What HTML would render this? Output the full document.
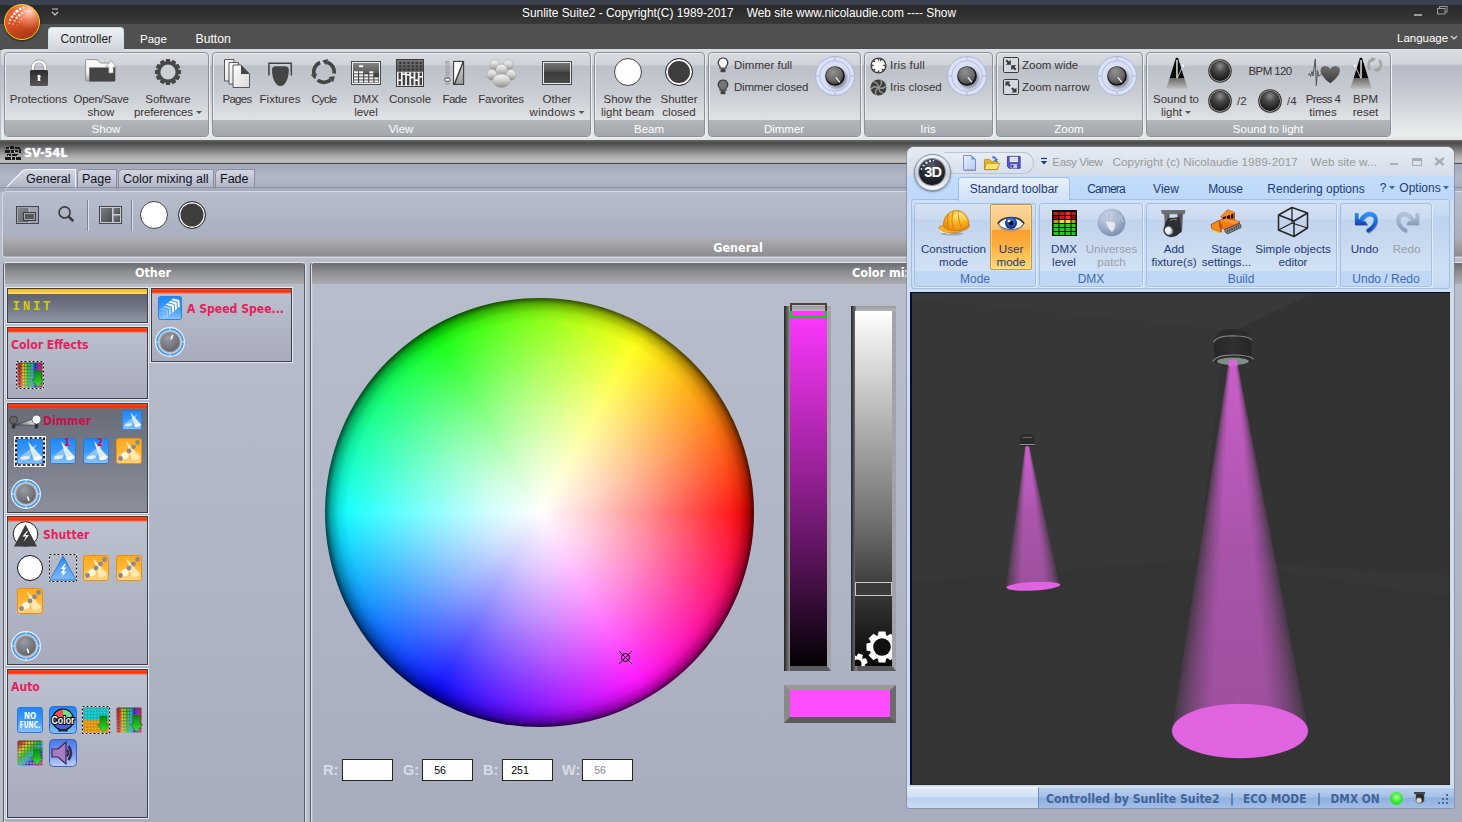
<!DOCTYPE html>
<html lang="en"><head><meta charset="utf-8"><title>Sunlite Suite2</title>
<style>
*{box-sizing:border-box;margin:0;padding:0}
html,body{width:1462px;height:822px;overflow:hidden}
body{position:relative;background:#b8bdcc;font-family:"Liberation Sans","DejaVu Sans",sans-serif;font-size:12px;color:#3a3a3a}
.a{position:absolute}
.t{position:absolute;white-space:nowrap;line-height:14px}
.c{text-align:center;transform:translateX(-50%)}
svg{position:absolute;overflow:visible}
/* main ribbon */
#topstrip{left:0;top:0;width:1462px;height:6px;background:#3c4150}
#titlebar{left:0;top:5px;width:1462px;height:20px;background:linear-gradient(#2b2b2b,#2e2e2e 40%,#3b3b3b)}
#tabrow{left:0;top:24.300px;width:1462px;height:25.700px;background:#505050}
#ribbon{left:1px;top:49px;width:1462px;height:91px;border-radius:4px 0 0 0;
 background:linear-gradient(#dadde3 0,#d0d4db 15px,#b5bac5 17px,#c3c7cf 40px,#dce0e3 68px,#e7ecec 85px,#e0e4e6 91px)}
.grp{position:absolute;top:52px;height:85px;border:1px solid #8c9098;border-radius:4px;
 background:linear-gradient(#d8dce2 0,#ced2d9 12px,#bcc0c9 13px,#c8ccd3 40px,#e0e4e6 68px);box-shadow:1px 1px 0 #eef0f3,inset 1px 1px 0 #e9ebef}
.grp i{position:absolute;left:0;right:0;bottom:0;height:16px;background:linear-gradient(#b3b6bb,#a3a6ab);border-radius:0 0 3px 3px}
.gl{position:absolute;white-space:nowrap;line-height:14px;color:#fff;top:122px;transform:translateX(-50%);font-size:11.5px}
.rt{position:absolute;white-space:nowrap;line-height:13px;text-align:center;transform:translateX(-50%);color:#3a3434;font-size:11.5px}
.st{position:absolute;white-space:nowrap;line-height:14px;color:#3a3434;font-size:11.5px}
.arr{display:inline-block;width:0;height:0;border-left:3px solid transparent;border-right:3px solid transparent;border-top:3px solid #555;vertical-align:middle;margin-left:3px}
</style></head><body>
<div class="a" id="topstrip"></div>
<div class="a" id="titlebar"></div>
<div class="a" id="tabrow"></div>
<div class="t" style="left:739px;top:6px;color:#fff;font-size:11.900px;transform:translateX(-50%);white-space:pre">Sunlite Suite2 - Copyright(C) 1989-2017    Web site www.nicolaudie.com ---- Show</div>
<div class="a" id="ribbon"></div>
<!-- active tab -->
<div class="a" style="left:48px;top:27px;width:76px;height:24px;border-radius:4px 4px 0 0;border:1px solid #bfe4ea;border-bottom:none;background:linear-gradient(#eef1f4,#dfe3e8 50%,#cfd3da)"></div>
<div class="t c" style="left:86.300px;top:32px;color:#222;font-size:11.900px">Controller</div>
<div class="t c" style="left:153.400px;top:32px;color:#fff;font-size:11.500px">Page</div>
<div class="t c" style="left:213.200px;top:32px;color:#fff;font-size:12.200px">Button</div>
<div class="t" style="left:1397px;top:31px;color:#fff;font-size:11.500px">Language</div>
<svg style="left:1449.500px;top:35px" width="8" height="6"><path d="M1 1 L4 4 L7 1" stroke="#ddd" stroke-width="1.2" fill="none"/></svg>
<!-- window buttons -->
<div class="a" style="left:1414px;top:14px;width:8px;height:2px;background:#9a9a9a"></div>
<svg style="left:1437px;top:6px" width="12" height="10"><rect x="2.5" y="0.5" width="7.500" height="5.500" fill="none" stroke="#9a9a9a"/><rect x="0.5" y="2.500" width="7.500" height="5.500" fill="#303030" stroke="#9a9a9a"/></svg>
<!-- qat arrow -->
<svg style="left:51px;top:8px" width="8" height="9"><path d="M1 1h6" stroke="#ccc" stroke-width="1"/><path d="M1 4 L4 7 L7 4" stroke="#ccc" stroke-width="1.2" fill="none"/></svg>
<!-- orb -->
<div class="a" style="left:4px;top:4px;width:36px;height:36px;border-radius:50%;background:radial-gradient(circle at 72% 18%,rgba(255,225,205,.95) 0,rgba(246,160,125,.7) 22%,rgba(230,100,50,0) 48%),linear-gradient(160deg,#e8663a 0,#e2562a 40%,#c2421c 70%,#9c3216 100%);border:1.800px solid #f4d81a;box-shadow:0 1px 2px rgba(0,0,0,.6)"></div>
<svg style="left:6px;top:5px" width="24" height="26" viewBox="0 0 24 26"><g fill="#fff"><circle cx="17.500" cy="2.500" r="1" opacity=".9"/><circle cx="14.200" cy="4" r="1.350" opacity=".95"/><circle cx="11" cy="6.200" r="1.450"/><circle cx="8.300" cy="8.800" r="1.400"/><circle cx="6" cy="11.800" r="1.300" opacity=".95"/><circle cx="4.300" cy="15" r="1.150" opacity=".9"/><circle cx="3.300" cy="18.300" r=".9" opacity=".8"/><circle cx="19.300" cy="6.200" r=".9" opacity=".7"/><circle cx="16.200" cy="8" r="1.150" opacity=".85"/><circle cx="13.300" cy="10.200" r="1.250" opacity=".9"/><circle cx="10.800" cy="12.800" r="1.200" opacity=".85"/><circle cx="8.700" cy="15.800" r="1.050" opacity=".8"/><circle cx="7.200" cy="19" r=".85" opacity=".65"/><circle cx="18" cy="12" r=".8" opacity=".55"/><circle cx="15.500" cy="14.300" r=".9" opacity=".6"/><circle cx="13.300" cy="17" r=".85" opacity=".55"/><circle cx="11.500" cy="20" r=".7" opacity=".45"/><circle cx="20.500" cy="10" r=".6" opacity=".4"/></g></svg>
<!-- groups -->
<div class="grp" style="left:4px;width:205px"><i></i></div>
<div class="grp" style="left:212px;width:379px"><i></i></div>
<div class="grp" style="left:594px;width:111px"><i></i></div>
<div class="grp" style="left:708px;width:153px"><i></i></div>
<div class="grp" style="left:864px;width:129px"><i></i></div>
<div class="grp" style="left:996px;width:147px"><i></i></div>
<div class="grp" style="left:1146px;width:245px"><i></i></div>
<div class="gl" style="left:106px">Show</div>
<div class="gl" style="left:401px">View</div>
<div class="gl" style="left:649px">Beam</div>
<div class="gl" style="left:784px">Dimmer</div>
<div class="gl" style="left:928px">Iris</div>
<div class="gl" style="left:1069px">Zoom</div>
<div class="gl" style="left:1268px">Sound to light</div>
<!-- Show group -->
<svg style="left:29px;top:59px" width="20" height="28" viewBox="0 0 20 28"><defs><linearGradient id="lk" x1="0" y1="0" x2="0" y2="1"><stop offset="0" stop-color="#2c2c2c"/><stop offset="1" stop-color="#565656"/></linearGradient></defs><path d="M3.800 13 V8.500 a6.200 6.200 0 0 1 12.400 0 V13" fill="none" stroke="#8e8e8e" stroke-width="3.400"/><path d="M3.800 13 V8.500 a6.200 6.200 0 0 1 12.400 0 V13" fill="none" stroke="#fbfbfb" stroke-width="2.200"/><rect x="1" y="11" width="18" height="16" rx="1.500" fill="url(#lk)"/><circle cx="10" cy="17.500" r="1.700" fill="#fff"/><path d="M9.100 17.500 h1.800 l.5 4.500 h-2.800z" fill="#fff"/></svg>
<svg style="left:85px;top:59px" width="32" height="24" viewBox="0 0 32 24"><defs><linearGradient id="fo" x1="0" y1="0" x2="0" y2="1"><stop offset="0" stop-color="#fdfdfd"/><stop offset=".6" stop-color="#f0f0f0"/><stop offset="1" stop-color="#a8a8a8"/></linearGradient></defs><path d="M.6 1.600 Q.6 .6 1.600 .6 h10.400 l3.600 3.400 h10 v18 h-24 q-1 0 -1 -1z" fill="url(#fo)" stroke="#8a8a8a" stroke-width=".9"/><path d="M4.300 8.400 h26 v13.200 q0 .9 -.9 .9 h-25.100z" fill="#454545"/><path d="M26 1.400 l5.300 6.600 h-3.100 v6 h-4.400 v-6 h-3.100z" fill="#fdfdfd" stroke="#8a8a8a" stroke-width=".7"/></svg>
<svg style="left:155px;top:59px" width="26" height="26" viewBox="-13 -13 26 26"><g fill="#484848"><circle r="10.600"/><g id="tooth"><path d="M-2 -13 h4 l.6 3.500 h-5.200z"/></g><use href="#tooth" transform="rotate(30)"/><use href="#tooth" transform="rotate(60)"/><use href="#tooth" transform="rotate(90)"/><use href="#tooth" transform="rotate(120)"/><use href="#tooth" transform="rotate(150)"/><use href="#tooth" transform="rotate(180)"/><use href="#tooth" transform="rotate(210)"/><use href="#tooth" transform="rotate(240)"/><use href="#tooth" transform="rotate(270)"/><use href="#tooth" transform="rotate(300)"/><use href="#tooth" transform="rotate(330)"/></g><circle r="7.600" fill="#cbcfd6"/></svg>
<div class="rt" style="left:38.5px;top:93px">Protections</div>
<div class="rt" style="left:101px;top:93px"><span style="letter-spacing:-.28px">Open/Save</span><br>show</div>
<div class="rt" style="left:168px;top:93px">Software<br><span style="letter-spacing:-.17px">preferences</span><span class="arr"></span></div>
<!-- View group -->
<svg style="left:223px;top:59px" width="28" height="30" viewBox="0 0 28 30"><defs><linearGradient id="pg" x1="0" y1="0" x2="1" y2="1"><stop offset="0" stop-color="#ffffff"/><stop offset="1" stop-color="#dadada"/></linearGradient></defs><g stroke="#4a4a4a" stroke-width=".9" fill="url(#pg)"><path d="M1.500 .5 h9.500 v21.500 h-9.500z"/><path d="M6 3.500 h9.500 v21.500 h-9.500z"/><path d="M10 6 h8 l8.500 9 v13.500 h-16.500z"/></g><path d="M18 6 l8.500 9 h-8.500z" fill="#444"/></svg>
<svg style="left:266px;top:61px" width="28" height="28" viewBox="0 0 28 28"><path d="M2.900 14.500 V2.200 H25.300 V14.500" fill="none" stroke="#444" stroke-width="1.500"/><path d="M6 9 Q6 5.300 10 5.300 H18.500 Q22.800 5.300 22.800 9 C22.800 17 19.500 25 14.400 25 C9.300 25 6 17 6 9z" fill="#444"/></svg>
<svg style="left:310px;top:58.300px" width="28" height="28" viewBox="-14 -14 28 28"><g id="cyc"><path d="M10.20 1.43 A10.3 10.3 0 0 0 3.18 -9.80" fill="none" stroke="#444" stroke-width="3.700"/><path d="M4.23 -13.03 L-1.76 -11.40 L2.13 -6.56z" fill="#444"/></g><use href="#cyc" transform="rotate(-120)"/><use href="#cyc" transform="rotate(-240)"/></svg>
<svg style="left:351px;top:61px" width="30" height="24" viewBox="0 0 30 24"><defs><linearGradient id="dx" x1="0" y1="0" x2="0" y2="1"><stop offset="0" stop-color="#868686"/><stop offset=".5" stop-color="#5a5a5a"/><stop offset=".55" stop-color="#3c3c3c"/><stop offset="1" stop-color="#4a4a4a"/></linearGradient></defs><rect x=".5" y=".5" width="29" height="23" fill="#efefef" stroke="#4a4a4a"/><rect x="2" y="2" width="26" height="20" fill="url(#dx)"/><g fill="#f2f2f2"><rect x="3" y="10.25" width="4" height="2.100"/><rect x="3" y="13.30" width="4" height="2.100"/><rect x="3" y="16.35" width="4" height="2.100"/><rect x="3" y="19.40" width="4" height="2.100"/><rect x="8.100" y="4.15" width="4" height="2.100"/><rect x="8.100" y="10.25" width="4" height="2.100"/><rect x="8.100" y="13.30" width="4" height="2.100"/><rect x="8.100" y="16.35" width="4" height="2.100"/><rect x="8.100" y="19.40" width="4" height="2.100"/><rect x="13.200" y="13.30" width="4" height="2.100"/><rect x="13.200" y="16.35" width="4" height="2.100"/><rect x="13.200" y="19.40" width="4" height="2.100"/><rect x="18.300" y="10.25" width="4" height="2.100"/><rect x="18.300" y="13.30" width="4" height="2.100"/><rect x="18.300" y="16.35" width="4" height="2.100"/><rect x="18.300" y="19.40" width="4" height="2.100"/><rect x="23.400" y="16.35" width="4" height="2.100"/><rect x="23.400" y="19.40" width="4" height="2.100"/></g></svg>
<svg style="left:396px;top:59px" width="28" height="28" viewBox="0 0 28 28"><defs><linearGradient id="cs" x1="0" y1="0" x2="0" y2="1"><stop offset="0" stop-color="#787878"/><stop offset="1" stop-color="#525252"/></linearGradient></defs><rect x=".5" y=".5" width="27" height="27" fill="#f2f2f2" stroke="#3c3c3c"/><rect x="1" y="1" width="26" height="11.800" fill="url(#cs)"/><g fill="#363636"><rect x="3.2" y="2.8" width="2.200" height="2.200"/><rect x="3.2" y="6.1" width="2.200" height="2.200"/><rect x="3.2" y="9.4" width="2.200" height="2.200"/><rect x="7.3" y="2.8" width="2.200" height="2.200"/><rect x="7.3" y="6.1" width="2.200" height="2.200"/><rect x="7.3" y="9.4" width="2.200" height="2.200"/><rect x="11.4" y="2.8" width="2.200" height="2.200"/><rect x="11.4" y="6.1" width="2.200" height="2.200"/><rect x="11.4" y="9.4" width="2.200" height="2.200"/><rect x="15.5" y="2.8" width="2.200" height="2.200"/><rect x="15.5" y="6.1" width="2.200" height="2.200"/><rect x="15.5" y="9.4" width="2.200" height="2.200"/><rect x="19.6" y="2.8" width="2.200" height="2.200"/><rect x="19.6" y="6.1" width="2.200" height="2.200"/><rect x="19.6" y="9.4" width="2.200" height="2.200"/><rect x="23.7" y="2.8" width="2.200" height="2.200"/><rect x="23.7" y="6.1" width="2.200" height="2.200"/><rect x="23.7" y="9.4" width="2.200" height="2.200"/></g><g fill="#3e3e3e"><rect x="2.50" y="13.500" width="2.400" height="12.800"/><rect x="6.72" y="13.500" width="2.400" height="12.800"/><rect x="10.94" y="13.500" width="2.400" height="12.800"/><rect x="15.16" y="13.500" width="2.400" height="12.800"/><rect x="19.38" y="13.500" width="2.400" height="12.800"/><rect x="23.60" y="13.500" width="2.400" height="12.800"/></g><g fill="#fff"><rect x="2.30" y="20.4" width="2.800" height="1.600"/><rect x="6.52" y="14.3" width="2.800" height="1.600"/><rect x="10.74" y="15.0" width="2.800" height="1.600"/><rect x="14.96" y="17.7" width="2.800" height="1.600"/><rect x="19.18" y="20.4" width="2.800" height="1.600"/><rect x="23.40" y="17.0" width="2.800" height="1.600"/></g></svg>
<svg style="left:444px;top:60px" width="22" height="26" viewBox="0 0 22 26"><path d="M3.400 1 v24" stroke="#a2a2a2" stroke-width="4.400" stroke-dasharray="1.400 .8"/><rect x=".8" y="18.200" width="5.200" height="3" rx=".6" fill="#fff" stroke="#444" stroke-width=".9"/><defs><linearGradient id="fd" x1="0" y1="0" x2="0" y2="1"><stop offset="0" stop-color="#d0d0d0"/><stop offset="1" stop-color="#9c9c9c"/></linearGradient></defs><rect x="9.600" y="1.400" width="10" height="23" fill="#fdfdfd"/><path d="M10.500 24.400 L19.600 1.400 V24.400z" fill="url(#fd)"/><rect x="9.600" y="1.400" width="10" height="23" fill="none" stroke="#3c3c3c" stroke-width="1.100"/><path d="M10.300 24.400 L19.300 1.400" stroke="#3c3c3c" stroke-width="1.500"/></svg>
<svg style="left:486px;top:58.500px" width="31" height="28.500" viewBox="0 0 33 30.500"><defs><linearGradient id="fv" x1="0" y1="0" x2="0" y2="1"><stop offset="0" stop-color="#f8f8f8"/><stop offset=".45" stop-color="#d4d4d4"/><stop offset="1" stop-color="#8c8c8c"/></linearGradient></defs><g fill="url(#fv)" stroke="#a6a6a6" stroke-width=".6"><circle cx="9.200" cy="6.400" r="5.400"/><circle cx="23.700" cy="6.400" r="5.400"/><ellipse cx="6.300" cy="17" rx="5.600" ry="5.800"/><ellipse cx="26.700" cy="17" rx="5.600" ry="5.800"/><circle cx="16.500" cy="11.700" r="6.200"/><ellipse cx="16.500" cy="23.200" rx="9.400" ry="7.200"/></g></svg>
<svg style="left:542px;top:61px" width="30" height="24" viewBox="0 0 30 24"><defs><linearGradient id="ow" x1="0" y1="0" x2="0" y2="1"><stop offset="0" stop-color="#767676"/><stop offset=".42" stop-color="#505050"/><stop offset=".44" stop-color="#3a3a3a"/><stop offset="1" stop-color="#4a4a4a"/></linearGradient></defs><rect x=".5" y=".5" width="29" height="23" fill="#eaeaea" stroke="#4a4a4a"/><rect x="2" y="2" width="26" height="20" fill="url(#ow)"/></svg>
<div class="rt" style="left:237px;top:93px"><span style="letter-spacing:-.7px">Pages</span></div>
<div class="rt" style="left:280px;top:93px">Fixtures</div>
<div class="rt" style="left:324px;top:93px"><span style="letter-spacing:-.75px">Cycle</span></div>
<div class="rt" style="left:366px;top:93px">DMX<br>level</div>
<div class="rt" style="left:410px;top:93px">Console</div>
<div class="rt" style="left:454.500px;top:93px"><span style="letter-spacing:-.5px">Fade</span></div>
<div class="rt" style="left:501px;top:93px"><span style="letter-spacing:-.2px">Favorites</span></div>
<div class="rt" style="left:557px;top:93px">Other<br><span style="letter-spacing:.25px">windows</span><span class="arr"></span></div>
<!-- Beam -->
<div class="a" style="left:614px;top:58px;width:28px;height:28px;border-radius:50%;background:#fff;border:1px solid #444"></div>
<div class="a" style="left:665px;top:58px;width:28px;height:28px;border-radius:50%;background:#3e3e3e;border:1px solid #333;box-shadow:inset 0 0 0 2px #fff"></div>
<div class="rt" style="left:627.500px;top:93px">Show the<br>light beam</div>
<div class="rt" style="left:679px;top:93px">Shutter<br>closed</div>
<svg width="0" height="0" style="left:0;top:0"><defs>
<radialGradient id="kb" cx=".42" cy=".3" r=".8"><stop offset="0" stop-color="#929292"/><stop offset=".6" stop-color="#6a6a6a"/><stop offset="1" stop-color="#3a3a3a"/></radialGradient><filter id="kbl" x="-50%" y="-50%" width="200%" height="200%"><feGaussianBlur stdDeviation="1.500"/></filter>
<radialGradient id="led" cx=".5" cy=".25" r=".75"><stop offset="0" stop-color="#8c8c8c"/><stop offset=".4" stop-color="#4a4a4a"/><stop offset=".8" stop-color="#262626"/><stop offset="1" stop-color="#1a1a1a"/></radialGradient>
<g id="knob"><circle r="19.500" fill="#dbe1f6" stroke="#aab6d6" stroke-width="1"/><circle r="15.300" fill="#d9dff5" stroke="#b4bedd" stroke-width="1"/><path d="M0 -19.500v4M0 19.500v-4M-19.500 0h4M19.500 0h-4" stroke="#bcc5e0" stroke-width="1.400"/><ellipse cx="2" cy="2.500" rx="10" ry="10" fill="#000" opacity=".35" filter="url(#kbl)"/><circle r="9.800" fill="#141414"/><circle cx="-.4" cy="-.6" r="8.600" fill="url(#kb)"/><path d="M1.200 1.800 L4.500 5.800" stroke="#f4f4f4" stroke-width="1.300" stroke-linecap="round"/></g>
<g id="ledb"><circle r="12.600" fill="#c9c9c9"/><circle r="11.800" fill="#333"/><circle r="10.700" fill="#a8a8a8"/><circle r="10" fill="#1a1a1a"/><circle r="9.600" fill="url(#led)"/></g>
<g id="bulb"><path d="M0 -7 a4.600 4.600 0 0 1 3 8.200 v2 h-6 v-2 a4.600 4.600 0 0 1 3 -8.200z"/><rect x="-2.500" y="4" width="5" height="3.200" rx="1" fill="#404040" stroke="none"/></g>
</defs></svg>
<!-- Dimmer -->
<svg style="left:723px;top:65px" width="1" height="1"><use href="#bulb" fill="#fff" stroke="#3c3c3c" stroke-width="1.200"/></svg>
<svg style="left:723px;top:87px" width="1" height="1"><use href="#bulb" fill="#767676" stroke="#3c3c3c" stroke-width="1.200"/></svg>
<div class="st" style="left:734px;top:58px">Dimmer full</div>
<div class="st" style="left:734px;top:80px"><span style="letter-spacing:-.2px">Dimmer closed</span></div>
<svg style="left:835px;top:76px" width="1" height="1"><use href="#knob"/></svg>
<!-- Iris -->
<svg style="left:870px;top:56.500px" width="17" height="17" viewBox="-8.500 -8.500 17 17"><circle r="7.400" fill="#fff" stroke="#3e3e3e" stroke-width="1.300"/><g fill="#3e3e3e"><g id="ib"><path d="M-1.300 -7 L1.300 -7 L.2 -4.200z" transform="rotate(22)"/></g><use href="#ib" transform="rotate(67)"/><use href="#ib" transform="rotate(112)"/><use href="#ib" transform="rotate(157)"/><use href="#ib" transform="rotate(202)"/><use href="#ib" transform="rotate(247)"/><use href="#ib" transform="rotate(292)"/><use href="#ib" transform="rotate(337)"/></g></svg>
<svg style="left:870px;top:78.700px" width="17" height="17" viewBox="-8.500 -8.500 17 17"><circle r="8" fill="#3e3e3e"/><g stroke="#9c9c9c" stroke-width="1.250" fill="none" stroke-linecap="round"><g id="ic"><path d="M.3 -.6 Q3.800 -2.500 2.600 -7"/></g><use href="#ic" transform="rotate(60)"/><use href="#ic" transform="rotate(120)"/><use href="#ic" transform="rotate(180)"/><use href="#ic" transform="rotate(240)"/><use href="#ic" transform="rotate(300)"/></g></svg>
<div class="st" style="left:890px;top:58px;letter-spacing:.2px">Iris full</div>
<div class="st" style="left:890px;top:80px">Iris closed</div>
<svg style="left:967px;top:76px" width="1" height="1"><use href="#knob"/></svg>
<!-- Zoom -->
<svg style="left:1003px;top:57px" width="16" height="16" viewBox="0 0 16 16"><rect x=".5" y=".5" width="15" height="15" rx="1.200" fill="#d4d8e0" stroke="#3a3a3a"/><path d="M7.800 2.800 V7.800 H2.800 L4.500 6 L2.500 4 L4 2.500 L6 4.500z" fill="#3a3a3a"/><path d="M8.200 13.200 V8.200 H13.200 L11.500 10 L13.500 12 L12 13.500 L10 11.500z" fill="#3a3a3a"/></svg>
<svg style="left:1003px;top:79px" width="16" height="16" viewBox="0 0 16 16"><rect x=".5" y=".5" width="15" height="15" rx="1.200" fill="#d4d8e0" stroke="#3a3a3a"/><path d="M2.500 7.500 V2.500 H7.500 L5.800 4.300 L7.800 6.300 L6.300 7.800 L4.300 5.800z" fill="#3a3a3a"/><path d="M13.500 8.500 V13.500 H8.500 L10.200 11.700 L8.200 9.700 L9.700 8.200 L11.700 10.200z" fill="#3a3a3a"/></svg>
<div class="st" style="left:1022px;top:58px">Zoom wide</div>
<div class="st" style="left:1022px;top:80px">Zoom narrow</div>
<svg style="left:1117px;top:76px" width="1" height="1"><use href="#knob"/></svg>
<!-- Sound to light -->
<svg width="0" height="0" style="left:0;top:0"><defs><linearGradient id="mt" x1="0" y1="0" x2="0" y2="1"><stop offset="0" stop-color="#6c6c6c"/><stop offset="1" stop-color="#bdbdbd"/></linearGradient>
<g id="metro"><path d="M-1.300 -14.500 Q0 -16.500 1.300 -14.500 L7.400 5.500 H-7.400z" fill="#080808"/><rect x="-.9" y="-13" width="1.800" height="18.500" fill="#d8d8d8"/><rect x="-.2" y="-13" width=".6" height="18.500" fill="#777"/><path d="M-7.400 5.500 H7.400 L11 15.800 H-11z" fill="url(#mt)"/><path d="M.3 5 L8 -11.800" stroke="#d4d4d4" stroke-width=".9"/><circle cx="6" cy="-7.200" r="1.400" fill="#f4f4f4"/></g></defs></svg>
<svg style="left:1177px;top:73px" width="1" height="1"><use href="#metro"/></svg>
<div class="rt" style="left:1176px;top:93px">Sound to<br>light<span class="arr"></span></div>
<svg style="left:1219.700px;top:71px" width="1" height="1"><use href="#ledb"/></svg>
<svg style="left:1219.700px;top:101px" width="1" height="1"><use href="#ledb"/></svg>
<svg style="left:1269.500px;top:101px" width="1" height="1"><use href="#ledb"/></svg>
<div class="st" style="left:1248.500px;top:64px;letter-spacing:-.6px">BPM 120</div>
<div class="st" style="left:1237px;top:94px">/2</div>
<div class="st" style="left:1287px;top:94px">/4</div>
<svg style="left:1307px;top:58px" width="34" height="28" viewBox="0 0 34 28"><defs><linearGradient id="hg" x1="0" y1="0" x2="0" y2="1"><stop offset="0" stop-color="#6e6e6e"/><stop offset="1" stop-color="#3c3c3c"/></linearGradient></defs><path d="M1 17 l1.500 -1.500 l1 3 l1.500 -5 l1 4.500 l1.200 -9 l1.100 -8 l1 26.500 l1.200 -15 l1.200 5.500 l1.300 -.5 l1.500 -2" fill="none" stroke="#555" stroke-width="1"/><path d="M23.200 25.300 C15.500 19.500 13 15 13.600 11.500 C14.300 7.500 20.500 6.500 23.200 11 C26 6.500 32.200 7.500 32.800 11.500 C33.400 15 31 19.500 23.200 25.300z" fill="url(#hg)"/></svg>
<div class="rt" style="left:1323px;top:93px"><span style="letter-spacing:-.62px">Press 4</span><br>times</div>
<svg style="left:1360.800px;top:73px" width="1" height="1"><g transform="scale(-1 1)"><use href="#metro"/></g><g fill="none" stroke="#a4a4a4" stroke-width="2.600"><path d="M9 -3 C6.500 -7 7 -12 11.500 -13.500"/><path d="M18.500 -13 C21 -9 20.500 -4 16 -2.500"/></g><path d="M10.500 -16.200 l4.800 2.200 l-4.300 3.200z M17 -5.500 l-4.800 2.200 l4.800 2.800z" fill="#a4a4a4"/></svg>
<div class="rt" style="left:1365.500px;top:93px">BPM<br>reset</div>
<!-- below ribbon -->
<div class="a" style="left:0;top:140px;width:1462px;height:4px;background:linear-gradient(#6a6a6a,#3c3c3c)"></div>
<div class="a" style="left:0;top:143px;width:1462px;height:21px;background:linear-gradient(#4c4c4c 0,#6e6e6e 25%,#a6a6a6 60%,#c6c6c6 92%,#555 96%,#444 100%)"></div>
<!-- SV icon -->
<svg style="left:5px;top:146px" width="16" height="15" viewBox="0 0 16 15"><g fill="#1a1a1a"><rect x="1" y="1" width="3" height="2"/><rect x="5" y="0" width="4" height="3"/><rect x="10" y="1" width="5" height="2"/><rect x="0" y="4" width="5" height="3"/><rect x="6" y="4" width="3" height="3"/><rect x="10" y="4" width="3" height="2"/><rect x="14" y="3" width="2" height="4"/><rect x="2" y="8" width="4" height="2"/><rect x="7" y="8" width="6" height="2"/><rect x="0" y="11" width="6" height="3"/><rect x="7" y="11" width="3" height="3"/><rect x="11" y="11" width="5" height="3"/></g><g fill="#ccc"><rect x="4" y="2" width="1" height="1"/><rect x="9" y="5" width="1" height="1"/><rect x="3" y="9" width="1" height="1"/><rect x="12" y="9" width="1" height="1"/><rect x="6" y="12" width="1" height="1"/></g></svg>
<div class="t" style="left:24px;top:146px;color:#fff;font-weight:bold;font-size:12.500px;font-family:'DejaVu Sans Condensed','DejaVu Sans',sans-serif;text-shadow:0 0 2px #dde6ff">SV-54L</div>
<!-- tab strip -->
<div class="a" style="left:0;top:164px;width:1462px;height:28px;background:linear-gradient(#a3a8b9,#b3b8c7 50%,#a8adbe 85%)"></div>
<svg style="left:0;top:168px" width="260" height="22"><defs><linearGradient id="tg" x1="0" y1="0" x2="0" y2="1"><stop offset="0" stop-color="#d4d8e3"/><stop offset="1" stop-color="#aeb3c3"/></linearGradient><linearGradient id="tg2" x1="0" y1="0" x2="0" y2="1"><stop offset="0" stop-color="#d3d7e1"/><stop offset="1" stop-color="#b0b5c5"/></linearGradient></defs>
<path d="M5.500 20.500 L22 3.500 Q24 1.500 27 1.500 H75.500 V20.500" fill="url(#tg)" stroke="#f2f4f8" stroke-width="1.200"/>
<path d="M77.500 20.500 V5.500 Q77.500 1.500 81.500 1.500 H116.500 V20.500" fill="url(#tg2)" stroke="#898d9d" stroke-width="1"/>
<path d="M118.500 20.500 V5.500 Q118.500 1.500 122.500 1.500 H213.500 V20.500" fill="url(#tg2)" stroke="#898d9d" stroke-width="1"/>
<path d="M215.500 20.500 V5.500 Q215.500 1.500 219.500 1.500 H254.500 V20.500" fill="url(#tg2)" stroke="#898d9d" stroke-width="1"/>
</svg>
<div class="t" style="left:26px;top:172px;color:#101020;font-size:12.500px">General</div>
<div class="t" style="left:82px;top:172px;color:#101020;font-size:12.500px">Page</div>
<div class="t" style="left:123px;top:172px;color:#101020;font-size:12.500px">Color mixing all</div>
<div class="t" style="left:220px;top:172px;color:#101020;font-size:12.500px">Fade</div>
<!-- toolbar panel -->
<div class="a" style="left:0;top:187px;width:1462px;height:1px;background:#8d91a0"></div>
<div class="a" style="left:2px;top:191px;width:1470px;height:67px;border-radius:4px;border:1px solid #d3d7e1;background:linear-gradient(#b9becd 0,#aaafc0 45px,#aeaeb2 46px,#8d8d91 64px,#c9ccd6 65px)"></div>
<div class="t c" style="left:738px;top:240.500px;color:#fff;font-weight:bold;font-size:12.500px;font-family:'DejaVu Sans Condensed','DejaVu Sans',sans-serif">General</div>
<!-- toolbar icons -->
<svg style="left:16px;top:206px" width="23" height="18" viewBox="0 0 23 18"><defs><linearGradient id="ig" x1="0" y1="0" x2="1" y2="1"><stop offset="0" stop-color="#7a7c84"/><stop offset="1" stop-color="#4a4a4e"/></linearGradient></defs><rect x=".5" y=".5" width="22" height="17" fill="#9ea2ae" stroke="#45464a"/><rect x="2" y="2" width="11" height="14" fill="url(#ig)" opacity=".7"/><rect x="7.500" y="6.500" width="12" height="8" fill="#55575d" stroke="#3e3e3e" stroke-width="1"/><rect x="8.600" y="7.600" width="9.800" height="5.800" fill="none" stroke="#b9bcc6" stroke-width=".8"/><path d="M13 1v5M13 15v2" stroke="#c9ccd6" stroke-width=".8"/></svg>
<svg style="left:56px;top:205px" width="20" height="20" viewBox="0 0 20 20"><circle cx="8.600" cy="7.400" r="5.500" fill="none" stroke="#3e3e3e" stroke-width="1.700"/><path d="M12.400 11.400 L17.300 16.300" stroke="#3e3e3e" stroke-width="2.700"/></svg>
<div class="a" style="left:87px;top:200px;width:2px;height:31px;background:linear-gradient(90deg,#7e828e 50%,#dde1ea 50%)"></div>
<svg style="left:99px;top:206px" width="23" height="18" viewBox="0 0 23 18"><rect x=".5" y=".5" width="22" height="17" fill="#c9ccd6" stroke="#45464a"/><rect x="2" y="2" width="11" height="14" fill="url(#ig)"/><rect x="14.500" y="2" width="6.500" height="6" fill="url(#ig)"/><rect x="14.500" y="9.500" width="6.500" height="6.500" fill="url(#ig)"/></svg>
<div class="a" style="left:131px;top:200px;width:2px;height:31px;background:linear-gradient(90deg,#7e828e 50%,#dde1ea 50%)"></div>
<div class="a" style="left:140px;top:201px;width:28px;height:28px;border-radius:50%;background:#fff;border:1px solid #444"></div>
<div class="a" style="left:178px;top:201px;width:28px;height:28px;border-radius:50%;background:#3e3e3e;border:1px solid #333;box-shadow:inset 0 0 0 1.500px #fff"></div>
<style>
.pn{position:absolute;border:1px solid #585c66;border-top-color:#e2e5ec;border-radius:4px 4px 0 0;background:linear-gradient(#b9becd,#a8adbe);box-shadow:inset 1.300px 0 0 #dde1e9,1.300px 0 0 #dde1e9}
.ph{position:absolute;left:1.300px;right:0;top:0;height:20.800px;border-radius:2px 3px 0 0;background:linear-gradient(#6b6c6f 0,#8e8f92 45%,#abacaf 100%)}
.pt{position:absolute;white-space:nowrap;line-height:14px;color:#fff;font-weight:bold;font-size:12.500px;font-family:'DejaVu Sans Condensed','DejaVu Sans',sans-serif}
.bx{position:absolute;border:1px solid #3c3f48;box-shadow:0 0 0 1px #e6e9f0;background:linear-gradient(#bcc1cf,#a7abbb)}
.bx b{position:absolute;left:0;right:0;top:0;height:4.500px;background:linear-gradient(#ff4a1c,#ff2c00 55%,rgba(255,70,30,.55) 85%,rgba(255,90,50,.15))}
.bt{position:absolute;white-space:nowrap;line-height:14px;color:#e6205c;font-weight:bold;font-size:12.100px;margin-top:.5px;font-family:'DejaVu Sans Condensed','DejaVu Sans',sans-serif}
</style>
<div class="pn" style="left:3px;top:262px;width:302px;height:570px"><div class="ph"></div></div>
<div class="pt c" style="left:153px;top:266px">Other</div>
<!-- INIT -->
<div class="bx" style="left:7px;top:288px;width:141px;height:35px;background:linear-gradient(#5e6270 5px,#6f7382 50%,#9095a4)"><b style="background:linear-gradient(#f2b024,#ffe060)"></b></div>
<div class="t" style="left:12.500px;top:300px;color:#d2ce00;font-weight:bold;font-size:12.500px;letter-spacing:2.700px;font-family:'Liberation Mono','DejaVu Sans Mono',monospace">INIT</div>
<!-- Color Effects -->
<div class="bx" style="left:7px;top:327px;width:141px;height:72px"><b></b></div>
<div class="bt" style="left:11px;top:337px">Color Effects</div>
<!-- Dimmer -->
<div class="bx" style="left:7px;top:403px;width:141px;height:110px;background:linear-gradient(#676b77,#8b8f9b)"><b></b></div>
<div class="bt" style="left:43px;top:413px;color:#c8104c">Dimmer</div>
<!-- Shutter -->
<div class="bx" style="left:7px;top:516px;width:141px;height:149px"><b></b></div>
<div class="bt" style="left:43px;top:527px">Shutter</div>
<!-- Auto -->
<div class="bx" style="left:7px;top:669px;width:141px;height:149px"><b></b></div>
<div class="bt" style="left:11px;top:679px">Auto</div>
<!-- A Speed -->
<div class="bx" style="left:151px;top:288px;width:141px;height:74px"><b></b></div>
<div class="bt" style="left:187px;top:301px">A Speed Spee...</div>
<svg width="0" height="0" style="left:0;top:0"><defs>
<linearGradient id="blg" x1="0" y1="0" x2="0" y2="1"><stop offset="0" stop-color="#1e86f6"/><stop offset=".55" stop-color="#3d9bf8"/><stop offset="1" stop-color="#8cc4fa"/></linearGradient>
<linearGradient id="org" x1="0" y1="0" x2="0" y2="1"><stop offset="0" stop-color="#ffa81c"/><stop offset=".55" stop-color="#ffb83a"/><stop offset="1" stop-color="#ffd58a"/></linearGradient>
<radialGradient id="k2" cx=".4" cy=".3" r=".8"><stop offset="0" stop-color="#9a9da6"/><stop offset="1" stop-color="#5a5d66"/></radialGradient>
<g id="bl"><rect x=".5" y=".5" width="25" height="25" rx="2.500" fill="url(#blg)" stroke="#2a78e0" stroke-width="1"/><path d="M20 5 L4 18 a4.500 2.200 -15 0 0 9 1.500z" fill="#a8d0f8" opacity=".7"/><path d="M11 3 L16.500 21 a4.500 2.200 -12 0 0 8 -2.500z" fill="#e8f4e8" opacity=".9"/><ellipse cx="8.500" cy="19.300" rx="4.500" ry="1.800" fill="#e6f2ff" opacity=".9" transform="rotate(-8 8.500 19.300)"/><ellipse cx="20.500" cy="20" rx="4.200" ry="1.800" fill="#fff" transform="rotate(-15 20.500 20)"/></g>
<g id="or"><rect x=".5" y=".5" width="25" height="25" rx="2.500" fill="url(#org)" stroke="#e89010" stroke-width="1"/><path d="M10 3 L15.500 21 a4.500 2.200 -12 0 0 8.500 -2.500z" fill="#ffeec0" opacity=".85"/><path d="M19 5 L5 17 a4 2 -15 0 0 7 3z" fill="#ffe8b0" opacity=".6"/><circle cx="9" cy="17.500" r="3.600" fill="#fffbe0" opacity=".9"/><g fill="#8a8a8a"><circle cx="4.500" cy="20.500" r="2.400"/><circle cx="13" cy="13" r="2.400"/><circle cx="17.500" cy="8.800" r="2.400"/><circle cx="21.500" cy="4.500" r="2.400"/></g></g>
<g id="kn2"><circle r="14.400" fill="#3f9cf8" stroke="#f2f6ff" stroke-width="1.100"/><path d="M0 -15v3M0 15v-3M-15 0h3M15 0h-3" stroke="#e4eeff" stroke-width="1"/><circle r="12.100" fill="#cbccd1"/><circle r="10.600" fill="#a2a3aa"/><circle r="9.700" fill="url(#k2)"/></g>
<linearGradient id="agr" x1="0" y1="0" x2="0" y2="1"><stop offset="0" stop-color="#0a8a0a"/><stop offset=".6" stop-color="#22c022"/><stop offset="1" stop-color="#48e848"/></linearGradient><g id="arrg"><path d="M-3.500 0 h7 v8.600 h2.600 l-6.100 7.700 l-6.100 -7.700 h2.600z" fill="url(#agr)" stroke="#0a7a0a" stroke-width=".5"/></g><linearGradient id="gbg" x1="0" y1="0" x2="0" y2="1"><stop offset="0" stop-color="#4a4a4a"/><stop offset="1" stop-color="#9a9a9a"/></linearGradient><pattern id="dots" width="3.100" height="3.100" patternUnits="userSpaceOnUse" x=".8" y=".8"><rect width="3.100" height="3.100" fill="#000"/><circle cx="1.550" cy="1.550" r="1.250" fill="#fff"/></pattern><mask id="dm"><rect x="0" y="0" width="26" height="26" fill="url(#dots)"/></mask>
</defs></svg>
<!-- Color effects icon -->
<svg style="left:16px;top:361px" width="28" height="28" viewBox="0 0 28 28"><defs><linearGradient id="rb" x1="0" y1="0" x2="1" y2="0"><stop offset="0" stop-color="#ff0000"/><stop offset=".1" stop-color="#ff0000"/><stop offset=".25" stop-color="#ffee00"/><stop offset=".42" stop-color="#10e010"/><stop offset=".58" stop-color="#00e0e0"/><stop offset=".72" stop-color="#1010ff"/><stop offset=".86" stop-color="#e000e0"/><stop offset="1" stop-color="#ff0020"/></linearGradient></defs><g transform="translate(1.500 1.500)"><rect width="25" height="25" rx="1.500" fill="url(#gbg)"/><rect width="25" height="25" fill="url(#rb)" mask="url(#dm)"/></g><rect x=".5" y=".5" width="27" height="27" fill="none" stroke="#fff" stroke-width="1"/><rect x=".5" y=".5" width="27" height="27" fill="none" stroke="#000" stroke-width="1" stroke-dasharray="2 2"/><use href="#arrg" x="22" y="10"/></svg>
<!-- Dimmer icons -->
<svg style="left:9px;top:414px" width="33" height="17" viewBox="0 0 33 17"><defs><linearGradient id="dg" x1="0" y1="0" x2="1" y2="0"><stop offset="0" stop-color="#555"/><stop offset="1" stop-color="#eee"/></linearGradient></defs><path d="M6 11 L27 4 V11z" fill="url(#dg)" stroke="#333" stroke-width=".6"/><circle cx="4.500" cy="6" r="4" fill="#666" stroke="#333" stroke-width=".8"/><rect x="2.800" y="10" width="3.500" height="4.500" rx="1" fill="#333"/><circle cx="27.500" cy="5.500" r="4.500" fill="#fff" stroke="#444" stroke-width=".8"/><rect x="25.700" y="10" width="3.500" height="4.500" rx="1" fill="#333"/></svg>
<svg style="left:122px;top:410px" width="20" height="20" viewBox="0 0 26 26"><use href="#bl"/></svg>
<svg style="left:14px;top:435.500px" width="32" height="31" viewBox="0 0 32 31"><g transform="translate(2.500 2.500) scale(1.038 1)"><use href="#bl"/></g><rect x=".5" y=".5" width="31" height="30" fill="none" stroke="#fff" stroke-width="1"/><rect x="2" y="2" width="28" height="27" fill="none" stroke="#fff" stroke-width="1.700"/><rect x="2" y="2" width="28" height="27" fill="none" stroke="#000" stroke-width="1.700" stroke-dasharray="2.600 2"/></svg>
<svg style="left:50px;top:438px" width="26" height="26"><use href="#bl"/></svg>
<svg style="left:83px;top:438px" width="26" height="26"><use href="#bl"/></svg>
<svg style="left:116px;top:438px" width="26" height="26"><use href="#or"/></svg>
<div class="t" style="left:64px;top:437px;color:#c8104c;font-weight:bold;font-size:10px;line-height:12px;font-family:'DejaVu Sans Condensed','DejaVu Sans',sans-serif">1</div>
<div class="t" style="left:97px;top:437px;color:#c8104c;font-weight:bold;font-size:10px;line-height:12px;font-family:'DejaVu Sans Condensed','DejaVu Sans',sans-serif">2</div>
<svg style="left:26px;top:493.500px" width="1" height="1"><use href="#kn2"/><path d="M1.600 3 L2.800 6.200" stroke="#fff" stroke-width="1.600" stroke-linecap="round"/></svg>
<!-- Shutter icons -->
<svg style="left:12px;top:521px" width="27" height="28" viewBox="0 0 27 28"><circle cx="13.500" cy="13" r="12.300" fill="#fff" stroke="#222" stroke-width="1"/><path d="M13.500 3.500 L25 25.500 H2z" fill="#3c3c3c"/><path d="M15 10 l-4.500 5.500 h3.500 l-2.500 5.500 l5.500 -7 h-3.500 l2.500 -4z" fill="#fff"/></svg>
<div class="a" style="left:17px;top:555px;width:26px;height:26px;border-radius:50%;background:#fff;border:1.200px solid #111"></div>
<svg style="left:49px;top:554px" width="28" height="28" viewBox="0 0 28 28"><defs><linearGradient id="trg" x1="0" y1="0" x2="0" y2="1"><stop offset="0" stop-color="#2a86f0"/><stop offset="1" stop-color="#7cbcf8"/></linearGradient></defs><path d="M14 2 L27 26 H1z" fill="url(#trg)" stroke="#2070d8" stroke-width=".8"/><path d="M15.500 10 l-4 5 h3 l-3 4.500 h3 l-2 4 l5 -6 h-3 l3 -4 h-3 l2.500 -3.500z" fill="#fff"/><rect x=".5" y=".5" width="27" height="27" fill="none" stroke="#fff" stroke-width="1"/><rect x=".5" y=".5" width="27" height="27" fill="none" stroke="#000" stroke-width="1" stroke-dasharray="2 2"/></svg>
<svg style="left:83px;top:555px" width="26" height="26"><use href="#or"/></svg>
<svg style="left:116px;top:555px" width="26" height="26"><use href="#or"/></svg>
<svg style="left:17px;top:588px" width="26" height="26"><use href="#or"/></svg>
<svg style="left:26px;top:646px" width="1" height="1"><use href="#kn2"/><path d="M1.400 3.200 L2.400 6.200" stroke="#fff" stroke-width="1.600" stroke-linecap="round"/></svg>
<!-- A speed icon & knob -->
<svg style="left:158px;top:296px" width="24" height="24" viewBox="0 0 26 26"><defs><clipPath id="spc"><rect x="1" y="1" width="24" height="24" rx="2"/></clipPath></defs><rect x=".5" y=".5" width="25" height="25" rx="2.500" fill="url(#blg)" stroke="#2a78e0"/><g clip-path="url(#spc)"><g fill="#fff" transform="translate(13.500 12.500) rotate(-40) scale(1.050 1.150)"><path d="M-1.200 -5 L2.800 0 L-1.200 5 L-3.800 5 L.2 0 L-3.800 -5z" transform="translate(-10 0)" opacity="0.18"/><path d="M-1.200 -5 L2.800 0 L-1.200 5 L-3.800 5 L.2 0 L-3.800 -5z" transform="translate(-6.2 0)" opacity="0.32"/><path d="M-1.200 -5 L2.800 0 L-1.200 5 L-3.800 5 L.2 0 L-3.800 -5z" transform="translate(-2.4 0)" opacity="0.55"/><path d="M-1.200 -5 L2.800 0 L-1.200 5 L-3.800 5 L.2 0 L-3.800 -5z" transform="translate(1.6 0)" opacity="1"/><path d="M-1.200 -5 L2.800 0 L-1.200 5 L-3.800 5 L.2 0 L-3.800 -5z" transform="translate(5.4 0)" opacity="1"/><path d="M-1.200 -5 L2.800 0 L-1.200 5 L-3.800 5 L.2 0 L-3.800 -5z" transform="translate(9.2 0)" opacity="1"/></g></g></svg>
<svg style="left:170px;top:342px" width="1" height="1"><use href="#kn2"/><path d="M1.200 -3.200 L2.600 -6.600" stroke="#fff" stroke-width="1.600" stroke-linecap="round"/></svg>
<!-- Auto icons -->
<svg style="left:17px;top:707px" width="26" height="26" viewBox="0 0 26 26"><rect x=".5" y=".5" width="25" height="25" rx="2.500" fill="url(#blg)" stroke="#2a78e0"/><text x="13" y="11.500" text-anchor="middle" font-family="DejaVu Sans Condensed,DejaVu Sans,sans-serif" font-weight="bold" font-size="8" fill="#fff">NO</text><text x="13" y="21" text-anchor="middle" font-family="DejaVu Sans Condensed,DejaVu Sans,sans-serif" font-weight="bold" font-size="8" fill="#fff" textLength="21" lengthAdjust="spacingAndGlyphs">FUNC.</text></svg>
<svg style="left:49px;top:706px" width="28" height="28" viewBox="0 0 28 28"><rect x=".5" y=".5" width="27" height="27" rx="4" fill="url(#blg)" stroke="#2a68d8"/><circle cx="14" cy="13.500" r="10.500" fill="#222"/><path d="M14 13.500 L4 10 A10.500 10.500 0 0 1 14 3z" fill="#ec5050"/><path d="M14 13.500 L14 3 A10.500 10.500 0 0 1 24 10z" fill="#6fe08c"/><path d="M14 13.500 L24 10 A10.500 10.500 0 1 1 4 10z" fill="#3e62e0"/><circle cx="14" cy="13.500" r="10.500" fill="none" stroke="#111" stroke-width="1.200"/><rect x="9" y="23.500" width="10" height="2" rx="1" fill="#222"/><text x="14" y="17.500" text-anchor="middle" font-family="Liberation Sans,sans-serif" font-weight="bold" font-size="10.500" fill="#fff" stroke="#000" stroke-width="2.200" paint-order="stroke" textLength="23" lengthAdjust="spacingAndGlyphs">Color</text></svg>
<svg style="left:82px;top:706px" width="28" height="28" viewBox="0 0 28 28"><defs><linearGradient id="co" x1="0" y1="0" x2="0" y2="1"><stop offset="0" stop-color="#00e8e8"/><stop offset=".49" stop-color="#00e0e0"/><stop offset=".51" stop-color="#ffa800"/><stop offset="1" stop-color="#ffb000"/></linearGradient></defs><g transform="translate(1.500 1.500)"><rect width="25" height="12.500" fill="#3a9a9a"/><rect y="12.500" width="25" height="12.500" fill="#c08a30"/><rect width="25" height="25" fill="url(#co)" mask="url(#dm)"/></g><rect x=".5" y=".5" width="27" height="27" fill="none" stroke="#fff"/><rect x=".5" y=".5" width="27" height="27" fill="none" stroke="#000" stroke-width="1.200" stroke-dasharray="2 2"/><use href="#arrg" x="21.500" y="10"/></svg>
<svg style="left:116px;top:707px" width="26" height="26" viewBox="0 0 26 26"><rect x=".5" y=".5" width="25" height="25" rx="1.500" fill="url(#gbg)"/><g transform="translate(.5 .5)"><rect width="25" height="25" fill="url(#rb)" mask="url(#dm)"/></g><use href="#arrg" x="20.600" y="8.600"/></svg>
<svg style="left:17px;top:740px" width="26" height="26" viewBox="0 0 26 26"><defs><linearGradient id="rb2" x1="0" y1="0" x2=".9" y2="1"><stop offset="0" stop-color="#ff0000"/><stop offset=".12" stop-color="#ff3000"/><stop offset=".28" stop-color="#ffee00"/><stop offset=".45" stop-color="#10e010"/><stop offset=".6" stop-color="#00e0e0"/><stop offset=".75" stop-color="#1010ff"/><stop offset=".9" stop-color="#e000e0"/><stop offset="1" stop-color="#ff0040"/></linearGradient></defs><rect x=".5" y=".5" width="25" height="25" rx="1.500" fill="url(#gbg)"/><g transform="translate(.5 .5)"><rect width="25" height="25" fill="url(#rb2)" mask="url(#dm)"/></g><use href="#arrg" x="20" y="9"/></svg>
<svg style="left:49px;top:739px" width="28" height="28" viewBox="0 0 28 28"><defs><linearGradient id="spg" x1="0" y1="0" x2="0" y2="1"><stop offset="0" stop-color="#4a78e8"/><stop offset=".6" stop-color="#7ea2f0"/><stop offset="1" stop-color="#c0d0f8"/></linearGradient></defs><rect x=".5" y=".5" width="27" height="27" rx="4" fill="url(#spg)" stroke="#3a60c8"/><path d="M3 10 h6 l8 -7 v22 l-8 -7 h-6z" fill="#a87cc4" stroke="#3a2a50" stroke-width="1.200"/><path d="M19.500 7 q5 7 0 14" fill="none" stroke="#3a2a50" stroke-width="2.600"/><path d="M18 10.500 q2.500 3.500 0 7" fill="none" stroke="#3a2a50" stroke-width="2"/></svg>
<!-- Color mix panel -->
<div class="pn" style="left:310px;top:262px;width:1170px;height:570px"><div class="ph"></div></div>
<div class="pt" style="left:852px;top:266px">Color mixing all</div>
<!-- wheel -->
<div class="a" style="left:325px;top:298px;width:429px;height:429px;border-radius:50%;background:
radial-gradient(circle closest-side,rgba(0,0,0,0) 0,rgba(0,0,0,0) 89%,rgba(0,0,0,.09) 93.500%,rgba(0,0,0,.32) 97.300%,rgba(0,0,0,.7) 100%),
radial-gradient(circle closest-side,#fff 0,rgba(255,255,255,.8) 25%,rgba(255,255,255,.55) 50%,rgba(255,255,255,.27) 75%,rgba(255,255,255,0) 99%),
conic-gradient(from 90deg,#f00,#f0f,#00f,#0ff,#0f0,#ff0,#f00)"></div>
<svg style="left:618px;top:650px" width="15" height="15" viewBox="-7.500 -7.500 15 15"><circle r="4" fill="none" stroke="#000" stroke-width="1"/><path d="M-6.500 -6.500 L6.500 6.500 M-6.500 6.500 L6.500 -6.500" stroke="#000" stroke-width="1"/></svg>
<!-- bars -->
<style>.fr{position:absolute;border-style:solid;border-width:5px 4px 5px 6px;border-color:#a9a9ab #a2a3a8 #5a5a5c #6f6f71;background:#000}
.fr:before{content:"";position:absolute;left:-6px;top:-5px;bottom:-5px;width:6px;background:linear-gradient(90deg,#242424,#8e8e90)}
.fr:after{content:"";position:absolute;left:-1px;right:-4px;top:-5px;height:5px;background:linear-gradient(#9a9a9c,#b6b6b9)}</style>
<div class="fr" style="left:784px;top:306px;width:47px;height:365px"></div>
<div class="a" style="left:790px;top:311px;width:37px;height:355px;background:linear-gradient(#fb38fb 0,#f836f8 3%,#c62bc6 25%,#8c1e8c 50%,#4a104a 75%,#0c030c 97%,#050105)"></div>
<div class="a" style="left:790px;top:303px;width:37px;height:8px;border:2px solid #4a4438;border-bottom:none"></div>
<div class="a" style="left:790px;top:311px;width:37px;height:7px;border:2px solid #12d012;border-top:none"></div>
<div class="fr" style="left:850.500px;top:306px;width:45.500px;height:365px"></div>
<div class="a" style="left:855px;top:311px;width:37px;height:355px;background:linear-gradient(#fff 0,#f2f2f2 5%,#aaa 35%,#6e6e6e 60%,#3c3c3c 78%,#1e1e1e 90%,#080808 100%)"></div>
<div class="a" style="left:855px;top:581.500px;width:37px;height:14px;border:1.500px solid #c8c8c8;background:#3a3a3a"></div>
<svg style="left:855px;top:626px" width="37" height="40" viewBox="855 626 37 40"><defs><clipPath id="gc"><rect x="855" y="626" width="37" height="40"/></clipPath></defs><g clip-path="url(#gc)"><g fill="#fff" transform="translate(882 647)"><circle r="12.300"/><g id="gt"><path d="M-3.400 -15.500 h6.800 l1 5 h-8.800z"/></g><use href="#gt" transform="rotate(45)"/><use href="#gt" transform="rotate(90)"/><use href="#gt" transform="rotate(135)"/><use href="#gt" transform="rotate(180)"/><use href="#gt" transform="rotate(225)"/><use href="#gt" transform="rotate(270)"/><use href="#gt" transform="rotate(315)"/></g><circle cx="882" cy="647" r="8.800" fill="#101010"/><g fill="#fff" transform="translate(857 664) rotate(20)"><circle r="7.500"/><g id="gt2"><path d="M-2.400 -10.500 h4.800 l.8 4 h-6.400z"/></g><use href="#gt2" transform="rotate(51)"/><use href="#gt2" transform="rotate(-51)"/><use href="#gt2" transform="rotate(102)"/></g><circle cx="857" cy="664" r="4.500" fill="#0a0a0a"/></g></svg>
<!-- swatch -->
<div class="a" style="left:784px;top:684.500px;width:112px;height:38.500px;border-style:solid;border-width:5px 6px 6px 6px;border-color:#9a9a9c #6c6c6e #5a5a5c #8a8a8c;background:#ff4cff"></div>
<!-- rgb inputs -->
<style>.lb{position:absolute;white-space:nowrap;line-height:16px;color:#d9dce6;font-weight:bold;font-size:14.500px;top:762px}
.in{position:absolute;top:759px;width:51px;height:22px;background:#fff;border:1px solid #222;font-size:10.500px;line-height:20px;text-align:center;color:#000;padding-right:15px}</style>
<div class="lb" style="left:323px">R:</div><div class="in" style="left:342px"></div>
<div class="lb" style="left:403px">G:</div><div class="in" style="left:422px">56</div>
<div class="lb" style="left:483px">B:</div><div class="in" style="left:502px">251</div>
<div class="lb" style="left:562px">W:</div><div class="in" style="left:582px;color:#8a8a8a">56</div>
<!-- Easy View window -->
<style>
#ev{left:907px;top:147px;width:547px;height:661px;border-radius:7px 7px 3px 3px;background:#cfddee;box-shadow:0 0 0 1px rgba(120,130,150,.6)}
#evt{left:907px;top:147px;width:547px;height:30px;border-radius:7px 7px 0 0;background:linear-gradient(#e6ebf2,#dde4ee 50%,#d5dde9)}
#evtab{left:907px;top:175.500px;width:547px;height:24.500px;background:linear-gradient(#c3dcfb,#bdd8fa)}
#evrb{left:911px;top:199px;width:539px;height:90px;border:1px solid #9ebfe8;border-radius:3px;background:linear-gradient(#d0e0f5 0,#c6d9f1 16px,#bdd2ee 17px,#cfe0f5 70px,#c6daf4 90px)}
.eg{position:absolute;top:203px;height:84px;border:1px solid #a4c0e4;border-radius:3px;background:linear-gradient(#d5e2f3 0,#cbdaef 15px,#c1d3ec 16px,#d2e1f4 66px);box-shadow:1px 1px 0 #e4eefb}
.eg i{position:absolute;left:0;right:0;bottom:0;height:15px;background:#c0d8f5;border-radius:0 0 2px 2px}
.egl{position:absolute;white-space:nowrap;line-height:14px;color:#3e6ab2;top:272px;transform:translateX(-50%);font-size:12px}
.et{position:absolute;white-space:nowrap;line-height:13px;text-align:center;transform:translateX(-50%);color:#1c3a78;font-size:11.600px;top:242.300px}
.etab{position:absolute;white-space:nowrap;line-height:14px;transform:translateX(-50%);color:#1c3a78;font-size:12px;top:182px}
</style>
<div class="a" id="ev"></div>
<div class="a" id="evt"></div>
<div class="a" id="evtab"></div>
<div class="a" id="evrb"></div>
<!-- qat pill -->
<div class="a" style="left:944px;top:152px;width:90px;height:22px;border-radius:0 11px 11px 0;border:1px solid #b9c6d8;border-left:none;background:linear-gradient(#e9eef5,#d6dfeb)"></div>
<!-- orb -->
<div class="a" style="left:914px;top:154px;width:36.600px;height:36.600px;border-radius:50%;background:linear-gradient(#f4f6fa,#c9ced8 55%,#f8f9fb);box-shadow:0 1px 2px rgba(0,0,0,.4);border:1px solid #7f8aa0"></div>
<div class="a" style="left:919.400px;top:159.400px;width:25.800px;height:25.800px;border-radius:50%;background:radial-gradient(circle at 50% 25%,#565a6a 0,#2a2c36 45%,#0c0c10 100%);box-shadow:0 0 0 1px #8a92a6"></div>
<div class="t c" style="left:932.800px;top:164.500px;color:#fff;font-weight:bold;font-size:14.500px;letter-spacing:-.6px;line-height:15px">3D</div>
<svg style="left:919px;top:159px" width="16" height="12"><g fill="#fff" opacity=".85"><circle cx="2.500" cy="10" r=".9"/><circle cx="4.500" cy="6.500" r="1.100"/><circle cx="7.500" cy="3.800" r="1.200"/><circle cx="11" cy="2.200" r="1.100"/><circle cx="14.500" cy="1.600" r=".8"/></g></svg>
<!-- qat icons -->
<svg style="left:963px;top:155px" width="13" height="16" viewBox="0 0 13 16"><defs><linearGradient id="dc" x1="0" y1="0" x2="1" y2="1"><stop offset="0" stop-color="#eaf1fe"/><stop offset="1" stop-color="#b4c8f2"/></linearGradient></defs><path d="M1.500 1.500 h8 l3.500 3.500 v11 h-11.500z" fill="#7a7e8c" opacity=".7"/><path d="M.5 .5 h8 l4 4 v10.500 h-12z" fill="url(#dc)" stroke="#7888c0" stroke-width=".9"/><path d="M8.500 .5 l4 4 h-4z" fill="#5a9cf0"/></svg>
<svg style="left:983.800px;top:154.600px" width="16.300" height="15.600" viewBox="0 0 18 17"><path d="M.5 5 h6 l1.500 2 h7 v9 h-14.500z" fill="#e8b830" stroke="#a88010" stroke-width=".8"/><path d="M2.500 9 h15 l-3 7 h-14z" fill="#ffe070" stroke="#a88010" stroke-width=".8"/><path d="M9 1.500 q4 -1 5 3 l1.800 -.5 l-2.300 3.500 l-3 -2 l1.800 -.5 q-.8 -2 -3.300 -1.500z" fill="#3a78d8"/></svg>
<svg style="left:1007.300px;top:156px" width="13.600" height="12.800" viewBox="0 0 15 15" preserveAspectRatio="none"><path d="M.5 .5 h14 v14 h-12 l-2 -2z" fill="#5654c4" stroke="#3a38a0"/><rect x="3" y="1" width="9" height="6" fill="#f4f4fc"/><path d="M4 3h7M4 5h7" stroke="#b8b8d8" stroke-width=".7"/><rect x="4" y="9.500" width="7" height="5" fill="#c8c8e4"/><rect x="5" y="10.500" width="2" height="3" fill="#28267a"/></svg>
<svg style="left:1040px;top:157px" width="8" height="9"><path d="M1 1.500h6" stroke="#1c3a78" stroke-width="1.200"/><path d="M.8 4 L7.200 4 L4 7.500z" fill="#1c3a78"/></svg>
<div class="t" style="left:1052.300px;top:155px;color:#9a9a9a;font-size:11.700px;letter-spacing:-.45px">Easy View</div>
<div class="t" style="left:1112.600px;top:155px;color:#9a9a9a;font-size:11.700px;letter-spacing:.04px">Copyright (c) Nicolaudie 1989-2017</div>
<div class="t" style="left:1310.600px;top:155px;color:#9a9a9a;font-size:11.700px">Web site w...</div>
<!-- win buttons -->
<div class="a" style="left:1390px;top:163px;width:7.500px;height:2.200px;background:#a9adb8"></div>
<div class="a" style="left:1412px;top:157.500px;width:9.500px;height:8px;border:1.200px solid #a9adb8;border-top-width:3px"></div>
<svg style="left:1434px;top:156.500px" width="11" height="9"><path d="M1.200 1 L9.800 8 M9.800 1 L1.200 8" stroke="#a9adb8" stroke-width="2.300"/></svg>
<!-- tabs -->
<div class="a" style="left:958px;top:177px;width:112px;height:24px;border:1px solid #9ebfe8;border-bottom:none;border-radius:4px 4px 0 0;background:linear-gradient(#e8f1fd,#d8e6f9 60%,#d0e0f5)"></div>
<div class="etab" style="left:1014px">Standard toolbar</div>
<div class="etab" style="left:1106px;letter-spacing:-.85px">Camera</div>
<div class="etab" style="left:1166px">View</div>
<div class="etab" style="left:1225.400px;letter-spacing:-.36px">Mouse</div>
<div class="etab" style="left:1316px">Rendering options</div>
<div class="etab" style="left:1383px;top:181px">?</div>
<div class="etab" style="left:1420px;top:181px">Options</div>
<svg style="left:1388.500px;top:186px" width="7" height="4"><path d="M0 0h6l-3 3.500z" fill="#3e6ab2"/></svg>
<svg style="left:1443px;top:186px" width="7" height="4"><path d="M0 0h6l-3 3.500z" fill="#3e6ab2"/></svg>
<!-- groups -->
<div class="eg" style="left:914px;width:122px"><i></i></div>
<div class="eg" style="left:1039px;width:104px"><i></i></div>
<div class="eg" style="left:1146px;width:191px"><i></i></div>
<div class="eg" style="left:1340px;width:92px"><i></i></div>
<div class="egl" style="left:975px">Mode</div>
<div class="egl" style="left:1091px">DMX</div>
<div class="egl" style="left:1241px">Build</div>
<div class="egl" style="left:1386px">Undo / Redo</div>
<!-- user mode highlight -->
<div class="a" style="left:990px;top:204px;width:42px;height:66px;border:1px solid #c8963c;border-radius:2px;background:linear-gradient(#fbd6a0 0,#fcc274 38%,#fb9e2c 40%,#fcb040 65%,#fedb78 100%);box-shadow:inset 0 0 0 1px rgba(255,240,200,.5)"></div>
<div class="et" style="left:953.500px">Construction<br>mode</div>
<div class="et" style="left:1011px">User<br>mode</div>
<div class="et" style="left:1064px">DMX<br>level</div>
<div class="et" style="left:1111.500px;color:#9a9ea8">Universes<br>patch</div>
<div class="et" style="left:1174px">Add<br>fixture(s)</div>
<div class="et" style="left:1226.500px">Stage<br>settings...</div>
<div class="et" style="left:1293px">Simple objects<br>editor</div>
<div class="et" style="left:1364.500px">Undo</div>
<div class="et" style="left:1406.500px;color:#9a9ea8">Redo</div>
<!-- hard hat -->
<svg style="left:938px;top:209px" width="32" height="27" viewBox="0 0 32 27"><defs><radialGradient id="hh" cx=".55" cy=".25" r=".85"><stop offset="0" stop-color="#ffe884"/><stop offset=".4" stop-color="#fdb924"/><stop offset="1" stop-color="#e07c08"/></radialGradient></defs><ellipse cx="14" cy="24.800" rx="11" ry="1.800" fill="#000" opacity=".22"/><path d="M5.500 17 C5 8 11 1.600 18.500 1.600 C25.500 1.600 30.600 7.500 31 15.500 C31.200 18 27 20 21 21.500 C14 23 6.500 21.500 5.500 17z" fill="url(#hh)" stroke="#c46a06" stroke-width=".7"/><path d="M5.500 17 C7 20.500 14 22.500 21 21.500 C27 20.300 31 18 31 15.500 C31.400 17.500 31 18.800 29 20 C24 22.800 16 24.500 9 23.800 C3 23 .8 20.500 1 18.500 C1.200 17 3.500 16.500 5.500 17z" fill="#fcae1e" stroke="#c46a06" stroke-width=".6"/><path d="M1.200 19.500 C3 23 9 24.300 14 24 C9 25.600 2 24.500 1.200 19.500z" fill="#f6efe0"/><path d="M15.500 2.300 C13.500 7 13.500 13 15.500 19 M20.500 1.800 C20 7 20.800 13 23.500 18.500 M10.500 5 C9 10 9.500 15 10.500 18.500" fill="none" stroke="#d07808" stroke-width=".9"/><path d="M20 4 q5 1 7.500 7" fill="none" stroke="#fff2b0" stroke-width="1.400" opacity=".7"/></svg>
<!-- eye -->
<svg style="left:997px;top:214px" width="28" height="18" viewBox="0 0 28 18"><defs><radialGradient id="ey" cx=".5" cy=".4" r=".6"><stop offset="0" stop-color="#6ab0ff"/><stop offset=".6" stop-color="#1c50c0"/><stop offset="1" stop-color="#0a2060"/></radialGradient></defs><path d="M1 9.500 C6 1.500 22 1.500 27 9.500 C22 17.500 6 17.500 1 9.500z" fill="#fafafa" stroke="#6a6a6a" stroke-width="1.200"/><path d="M1 9.500 C6 1.500 22 1.500 27 9.500" fill="none" stroke="#3a3a3a" stroke-width="1.700"/><path d="M2.500 12 C8 18.500 20 18.500 25.500 12" fill="none" stroke="#9a9a9a" stroke-width="1.200"/><circle cx="14" cy="9" r="6" fill="url(#ey)"/><circle cx="14" cy="9" r="2.500" fill="#05102a"/><circle cx="12" cy="7" r="1.300" fill="#fff"/></svg>
<!-- DMX level -->
<svg style="left:1052px;top:210px" width="25" height="26" viewBox="0 0 25 26"><rect width="25" height="26" fill="#101010"/><g><g fill="#cc1818"><rect x="1.500" y="2" width="5" height="3"/><rect x="7.500" y="2" width="5" height="3"/><rect x="13.500" y="2" width="5" height="3" fill="#ff2020"/><rect x="19.500" y="2" width="4" height="3"/><rect x="1.500" y="6" width="5" height="3" fill="#901010"/><rect x="7.500" y="6" width="5" height="3"/><rect x="13.500" y="6" width="5" height="3" fill="#ff2020"/><rect x="19.500" y="6" width="4" height="3" fill="#901010"/></g><g fill="#f0e020"><rect x="1.500" y="10" width="5" height="3" fill="#b0a010"/><rect x="7.500" y="10" width="5" height="3"/><rect x="13.500" y="10" width="5" height="3"/><rect x="19.500" y="10" width="4" height="3" fill="#b0a010"/></g><g fill="#18d018"><rect x="1.500" y="14" width="5" height="3"/><rect x="7.500" y="14" width="5" height="3"/><rect x="13.500" y="14" width="5" height="3"/><rect x="19.500" y="14" width="4" height="3"/><rect x="1.500" y="18" width="5" height="3"/><rect x="7.500" y="18" width="5" height="3"/><rect x="13.500" y="18" width="5" height="3"/><rect x="19.500" y="18" width="4" height="3"/><rect x="1.500" y="22" width="5" height="3"/><rect x="7.500" y="22" width="5" height="3"/><rect x="13.500" y="22" width="5" height="3"/><rect x="19.500" y="22" width="4" height="3"/></g></g></svg>
<!-- globe -->
<svg style="left:1097px;top:208px" width="29" height="29" viewBox="0 0 29 29"><defs><radialGradient id="gl" cx=".4" cy=".3" r=".8"><stop offset="0" stop-color="#d4dcea"/><stop offset=".6" stop-color="#98a8c4"/><stop offset="1" stop-color="#7486aa"/></radialGradient></defs><circle cx="14.500" cy="14.500" r="13.800" fill="url(#gl)"/><path d="M9 14 q5 -2 9 1 q1 5 -3 9 q-4 -3 -6 -10z" fill="#eef2f8" opacity=".85"/><text x="14.500" y="13.500" text-anchor="middle" font-family="Liberation Sans,sans-serif" font-weight="bold" font-size="10.500" fill="#b4c0d6" textLength="25" lengthAdjust="spacingAndGlyphs">DMX</text></svg>
<!-- add fixture -->
<svg style="left:1160px;top:209px" width="27" height="29" viewBox="0 0 27 29"><defs><linearGradient id="fx" x1="0" y1="0" x2="1" y2="0"><stop offset="0" stop-color="#7a7c80"/><stop offset=".45" stop-color="#3a3b3e"/><stop offset="1" stop-color="#5a5c60"/></linearGradient><radialGradient id="fl" cx=".4" cy=".35" r=".7"><stop offset="0" stop-color="#ffffff"/><stop offset=".6" stop-color="#dfe8ee"/><stop offset="1" stop-color="#8a98a4"/></radialGradient></defs><path d="M1.500 1.500 H25 L24.300 4.800 H2.300z" fill="#6c6e72" stroke="#44464a" stroke-width=".5"/><path d="M4 4.800 H9.500 V9 H17.500 V4.800 H23 L22 22 Q21.500 24.500 18.500 24 L17.500 12 H9.500 L8.500 19 L5 19z" fill="url(#fx)"/><path d="M8.500 9.500 L19 8.500 L21 22 Q17 28.500 9.500 27.500 L4.500 22 Q4 14 8.500 9.500z" fill="#2e2f32" stroke="#1e1f22" stroke-width=".5"/><path d="M10 11.500 q4 -2.500 7 -.5" stroke="#8a8c90" stroke-width="1" fill="none"/><ellipse cx="9.200" cy="21.500" rx="5.300" ry="5.800" fill="#4a4c50" stroke="#1c1d20" stroke-width=".8" transform="rotate(-25 9.200 21.500)"/><ellipse cx="8.700" cy="21.800" rx="3.700" ry="4.200" fill="url(#fl)" transform="rotate(-25 8.700 21.800)"/></svg>
<!-- bulldozer -->
<svg style="left:1210px;top:208.500px" width="32" height="26" viewBox="0 0 32 26"><path d="M11 7.500 L17.500 .8 L24.500 3.500 V11 L16 15z" fill="#f4700e" stroke="#7a2c04" stroke-width=".6"/><path d="M17.500 .8 L24.500 3.500 L19 7 L11 7.500z" fill="#fb8a22"/><path d="M13 8.300 L16 7.300 V11.800 L13 12.800z M17 7 L20 5.800 V10.500 L17 11.600z" fill="#1e1006"/><path d="M21 5.500 L23.500 4.500 V9 L21 10z" fill="#2a1608"/><path d="M9 11.500 L16 9.500 L29.500 12.500 V17 L17 21.500 L9 17.500z" fill="#f87a14" stroke="#7a2c04" stroke-width=".6"/><path d="M16 9.500 L29.500 12.500 L24 15 L10 12z" fill="#fc9630"/><path d="M15 20 L29 14.500 Q31.800 15.500 31 18.500 L18 24.800 Q14 24 15 20z" fill="#8c8c8c" stroke="#3a3a3a" stroke-width=".8"/><path d="M17 22.300 L29.500 16.800" stroke="#4a4a4a" stroke-width="2.800" stroke-dasharray="1.300 1.100"/><path d="M1 15.500 L8.500 11.500 L12 17 L11 23.500 L2 20z" fill="#f88a18" stroke="#7a2c04" stroke-width=".6"/><path d="M8.500 11.500 L12 17 L11 23.500 L9 17z" fill="#c85408"/><path d="M2 20 L11 23.500 L10.800 24.800 L1.800 21.300z" fill="#ffd83a"/><path d="M3 20.800 v1 M5 21.500 v1 M7 22.300 v1 M9 23 v1" stroke="#b88a10" stroke-width=".7"/></svg>
<!-- cube -->
<svg style="left:1277px;top:206px" width="32" height="32" viewBox="0 0 32 32"><g fill="none" stroke="#262626" stroke-width="1.500" stroke-linejoin="round"><path d="M1.500 9 L15 1.500 L30.500 7 L17 15z"/><path d="M1.500 9 V24 L17 30.500 V15"/><path d="M30.500 7 V22 L17 30.500"/><path d="M15 1.500 V17 L1.500 24 M15 17 L30.500 22" stroke-width="1.300"/></g></svg>
<!-- undo / redo -->
<svg style="left:1350px;top:208px" width="74" height="28" viewBox="1350 208 74 28"><defs><linearGradient id="ud" x1="0" y1="0" x2="0" y2="1"><stop offset="0" stop-color="#2e90f4"/><stop offset="1" stop-color="#0e48b4"/></linearGradient><linearGradient id="rd" x1="0" y1="0" x2="0" y2="1"><stop offset="0" stop-color="#b4c2d8"/><stop offset="1" stop-color="#8a9cba"/></linearGradient>
<g id="uarr"><path d="M1361.500 219.500 Q1364.500 214.200 1369.500 213.800 Q1376.300 214.200 1375.600 221 Q1374.800 226.500 1368.300 230.500" fill="none" stroke-width="3.900" stroke-linecap="round"/><path d="M1354.900 213 L1358.300 213 L1358.300 218.500 L1362 221.300 L1365.500 221.300 L1367.500 224.900 L1354.900 224.900z" stroke="none"/></g></defs>
<use href="#uarr" stroke="#0a2a70" fill="#0a2a70" opacity=".35" transform="translate(.7 1)"/>
<use href="#uarr" stroke="url(#ud)" fill="url(#ud)"/>
<g transform="translate(2773.700 0) scale(-1 1)"><use href="#uarr" stroke="#6a7a98" fill="#6a7a98" opacity=".25" transform="translate(-.7 1)"/><use href="#uarr" stroke="url(#rd)" fill="url(#rd)"/></g>
</svg>
<!-- viewport -->
<div class="a" style="left:910px;top:292px;width:540px;height:492.500px;background:#343434;border-left:2px solid #05093a;border-top:2px solid #05093a;border-right:1px solid #2a2a2a;border-bottom:1px solid #2a2a2a"></div>
<svg style="left:912px;top:294px" width="537" height="490" viewBox="912 294 537 490"><defs>
<linearGradient id="bg1" gradientUnits="userSpaceOnUse" x1="0" y1="361" x2="0" y2="731"><stop offset="0" stop-color="#e566e5" stop-opacity="0.149"/><stop offset=".5" stop-color="#e063e0" stop-opacity="0.093"/><stop offset="1" stop-color="#e063e0" stop-opacity="0.076"/></linearGradient><linearGradient id="bg1b" gradientUnits="userSpaceOnUse" x1="0" y1="361" x2="0" y2="731"><stop offset="0" stop-color="#e566e5" stop-opacity="0.2"/><stop offset=".5" stop-color="#e063e0" stop-opacity="0.15"/><stop offset="1" stop-color="#e063e0" stop-opacity="0.12"/></linearGradient>
<linearGradient id="bg2" gradientUnits="userSpaceOnUse" x1="0" y1="446" x2="0" y2="587"><stop offset="0" stop-color="#e566e5" stop-opacity="0.149"/><stop offset=".5" stop-color="#e063e0" stop-opacity="0.093"/><stop offset="1" stop-color="#e063e0" stop-opacity="0.076"/></linearGradient><linearGradient id="bg2b" gradientUnits="userSpaceOnUse" x1="0" y1="446" x2="0" y2="587"><stop offset="0" stop-color="#e566e5" stop-opacity="0.2"/><stop offset=".5" stop-color="#e063e0" stop-opacity="0.15"/><stop offset="1" stop-color="#e063e0" stop-opacity="0.12"/></linearGradient>
<linearGradient id="fxb" x1="0" y1="0" x2="1" y2="0"><stop offset="0" stop-color="#262626"/><stop offset=".5" stop-color="#303030"/><stop offset="1" stop-color="#262626"/></linearGradient>
</defs>
<rect x="912" y="293" width="537" height="491" fill="#333"/>
<path d="M912 299 L1225 330 L1198 559.500 L912 583z" fill="#373737"/>
<path d="M912 293 H1314 L1238 329 L1225 330 L912 299z" fill="#393939"/>
<path d="M912 583 L1198 559.500 L1449 598 V784 H912z" fill="#343434"/>
<path d="M1198 559.500 L1449 598 V575z" fill="#363636"/>
<!-- big beam -->
<path d="M1228.6 361 L1237.2 361 L1308.0 731 L1172.0 731z" fill="url(#bg1b)"/>
<path d="M1228.8 361 L1237.0 361 L1304.6 731 L1175.4 731z" fill="url(#bg1)"/>
<path d="M1229.1 361 L1236.7 361 L1300.8 731 L1179.2 731z" fill="url(#bg1)"/>
<path d="M1229.3 361 L1236.5 361 L1297.0 731 L1183.0 731z" fill="url(#bg1)"/>
<path d="M1229.5 361 L1236.3 361 L1293.3 731 L1186.7 731z" fill="url(#bg1)"/>
<path d="M1229.8 361 L1236.0 361 L1289.5 731 L1190.5 731z" fill="url(#bg1)"/>
<path d="M1230.0 361 L1235.8 361 L1285.7 731 L1194.3 731z" fill="url(#bg1)"/>
<path d="M1230.2 361 L1235.6 361 L1281.9 731 L1198.1 731z" fill="url(#bg1)"/>
<path d="M1230.5 361 L1235.3 361 L1278.2 731 L1201.8 731z" fill="url(#bg1)"/>
<path d="M1230.7 361 L1235.1 361 L1274.4 731 L1205.6 731z" fill="url(#bg1)"/>
<path d="M1231.0 361 L1234.8 361 L1270.6 731 L1209.4 731z" fill="url(#bg1)"/>
<ellipse cx="1240" cy="731" rx="68" ry="27.300" fill="#e063e0"/>
<!-- small beam -->
<path d="M1025.2 446 L1029.2 446 L1060.0 586.5 L1006.0 586.5z" fill="url(#bg2b)"/>
<path d="M1025.3 446 L1029.1 446 L1058.7 586.5 L1007.4 586.5z" fill="url(#bg2)"/>
<path d="M1025.4 446 L1029.0 446 L1057.2 586.5 L1008.9 586.5z" fill="url(#bg2)"/>
<path d="M1025.5 446 L1028.9 446 L1055.7 586.5 L1010.4 586.5z" fill="url(#bg2)"/>
<path d="M1025.6 446 L1028.8 446 L1054.2 586.5 L1011.9 586.5z" fill="url(#bg2)"/>
<path d="M1025.7 446 L1028.7 446 L1052.7 586.5 L1013.4 586.5z" fill="url(#bg2)"/>
<path d="M1025.8 446 L1028.6 446 L1051.2 586.5 L1014.9 586.5z" fill="url(#bg2)"/>
<path d="M1025.9 446 L1028.5 446 L1049.7 586.5 L1016.4 586.5z" fill="url(#bg2)"/>
<path d="M1026.0 446 L1028.4 446 L1048.2 586.5 L1017.9 586.5z" fill="url(#bg2)"/>
<path d="M1026.2 446 L1028.2 446 L1046.7 586.5 L1019.4 586.5z" fill="url(#bg2)"/>
<path d="M1026.3 446 L1028.1 446 L1045.2 586.5 L1020.9 586.5z" fill="url(#bg2)"/>
<ellipse cx="1033.400" cy="586.200" rx="27" ry="4.300" fill="#e063e0" transform="rotate(-3 1033.400 586.200)"/>
<!-- big fixture -->
<path d="M1215.900 337 Q1217 329.500 1232.500 329 Q1248 329.500 1249.800 336 L1251.900 340.600 Q1250 336 1232.500 335.800 Q1216 336 1213.900 342.300z" fill="#2b2b2b"/>
<path d="M1213.900 342.300 Q1216 336 1232.500 335.800 Q1250 336 1251.900 340.600 L1251 358 Q1249 355 1232.500 355 Q1216 355.500 1214.600 360z" fill="url(#fxb)"/>
<path d="M1213.900 342.300 Q1216 336 1232.500 335.800 Q1250 336 1251.900 340.600" fill="none" stroke="#8c8c8c" stroke-width="1.100"/>
<path d="M1213 361 Q1216 355.300 1232.500 355 Q1250 355 1253.400 358.900 Q1250 365 1233 365.600 Q1216 365.600 1213 361z" fill="#2a2a2a"/>
<ellipse cx="1232.900" cy="361.300" rx="16" ry="3.700" fill="#7e8e87"/>
<path d="M1213 361.500 Q1216 355.300 1232.500 355 Q1250 355 1253.400 359.300" fill="none" stroke="#8e8e8e" stroke-width="1.200"/>
<path d="M1228 366 L1237.900 366 L1236.600 360 Q1233 358.600 1229.400 360z" fill="#d468d4"/>
<!-- small fixture -->
<path d="M1020 437.500 Q1021 434 1027.300 434 Q1033.500 434 1034.500 437.500 L1034.500 444 L1020 444z" fill="#2a2a2a"/>
<path d="M1022 437.400 H1032.300" stroke="#7c7c7c" stroke-width=".8"/>
<path d="M1020 444.800 H1034.800 L1034 446.300 H1020.800z" fill="#262626"/>
<path d="M1019.800 444.500 H1034.800" stroke="#9c9c9c" stroke-width=".9"/>
</svg>
<!-- status bar -->
<div class="a" style="left:907px;top:786.500px;width:547px;height:21.500px;border-radius:0 0 3px 3px;background:linear-gradient(#e2ecf9,#cfe0f6 45%,#b9d0ef 50%,#c9dcf5);border-top:1px solid #f4f8fd"></div>
<div class="a" style="left:1038px;top:786.500px;width:416px;height:21.500px;border-radius:0 0 3px 0;background:linear-gradient(#b9cfee,#a5c0e6 45%,#8eb0de 50%,#a2bfe6);border-left:1px solid #6a8cc0;border-top:1px solid #d4e2f5"></div>
<div class="t" style="left:1046px;top:792px;color:#42629a;font-weight:bold;font-size:12.150px;font-family:'DejaVu Sans Condensed','DejaVu Sans',sans-serif">Controlled by Sunlite Suite2</div>
<div class="t" style="left:1230px;top:792px;color:#42629a;font-weight:bold;font-size:11.800px;font-family:'DejaVu Sans Condensed','DejaVu Sans',sans-serif">|</div>
<div class="t" style="left:1243px;top:792px;color:#42629a;font-weight:bold;font-size:11.800px;font-family:'DejaVu Sans Condensed','DejaVu Sans',sans-serif">ECO MODE</div>
<div class="t" style="left:1317px;top:792px;color:#42629a;font-weight:bold;font-size:11.800px;font-family:'DejaVu Sans Condensed','DejaVu Sans',sans-serif">|</div>
<div class="t" style="left:1330.500px;top:792px;color:#42629a;font-weight:bold;font-size:11.800px;font-family:'DejaVu Sans Condensed','DejaVu Sans',sans-serif">DMX ON</div>
<div class="a" style="left:1390px;top:792px;width:13px;height:13px;border-radius:50%;background:radial-gradient(circle at 50% 40%,#a8ff88 0,#3ae83a 50%,#20c020 100%);box-shadow:0 0 2px #6f6"></div>
<svg style="left:1413px;top:791px" width="13" height="15" viewBox="0 0 13 15"><path d="M1 1 h11 v2 h-11z" fill="#444"/><path d="M3 3 h8 v7 q-4 4 -8 0z" fill="#2a2a2a" stroke="#555" stroke-width=".6"/><circle cx="6" cy="9.500" r="2.800" fill="#ddd" stroke="#777" stroke-width=".8"/></svg>
<svg style="left:1438px;top:794px" width="12" height="12"><g fill="#4a6aa0"><rect x="8" y="0" width="2" height="2"/><rect x="4" y="4" width="2" height="2"/><rect x="8" y="4" width="2" height="2"/><rect x="0" y="8" width="2" height="2"/><rect x="4" y="8" width="2" height="2"/><rect x="8" y="8" width="2" height="2"/></g></svg>
</body></html>
